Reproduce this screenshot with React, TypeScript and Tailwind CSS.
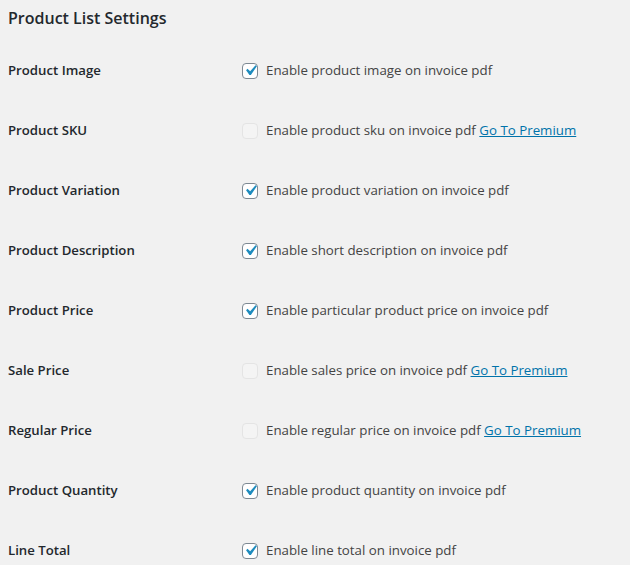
const rows: { label: string; text: string; checked: boolean; premium?: boolean }[] = [
  { label: 'Product Image', text: 'Enable product image on invoice pdf', checked: true },
  { label: 'Product SKU', text: 'Enable product sku on invoice pdf', checked: false, premium: true },
  { label: 'Product Variation', text: 'Enable product variation on invoice pdf', checked: true },
  { label: 'Product Description', text: 'Enable short description on invoice pdf', checked: true },
  { label: 'Product Price', text: 'Enable particular product price on invoice pdf', checked: true },
  { label: 'Sale Price', text: 'Enable sales price on invoice pdf', checked: false, premium: true },
  { label: 'Regular Price', text: 'Enable regular price on invoice pdf', checked: false, premium: true },
  { label: 'Product Quantity', text: 'Enable product quantity on invoice pdf', checked: true },
  { label: 'Line Total', text: 'Enable line total on invoice pdf', checked: true },
];

function Checkbox({ checked }: { checked: boolean }) {
  if (!checked) {
    return <span className="w-4 h-4 shrink-0 rounded-[4px] border border-[#e4e4e4] bg-[#f4f4f4]" />;
  }
  return (
    <span className="w-4 h-4 shrink-0 rounded-[4px] border border-[#7e8993] bg-white flex items-center justify-center overflow-visible">
      <svg viewBox="0 0 20 20" className="w-[21px] h-[21px] shrink-0 -mt-[1px]">
        <path d="M14.83 4.89l1.34.94-5.81 8.38H9.02L5.78 9.67l1.34-1.25 2.57 2.4z" fill="#1e8cbe" />
      </svg>
    </span>
  );
}

export default function App() {
  return (
    <div className="bg-[#f1f1f1] min-h-[565px] pl-2 font-['Open_Sans',sans-serif] text-[13.3px] text-[#444]">
      <h2 className="pt-[7px] text-[16px] font-semibold text-[#23282d] leading-[22px]">Product List Settings</h2>
      <div className="mt-[12px]">
        {rows.map((r) => (
          <div key={r.label} className="flex items-center h-[60px]">
            <div className="w-[234px] shrink-0 text-[13.2px] font-semibold text-[#23282d]">{r.label}</div>
            <label className="flex items-center gap-2">
              <Checkbox checked={r.checked} />
              <span>
                {r.text}
                {r.premium && (
                  <>
                    {' '}
                    <a href="#" className="text-[#0073aa] underline">Go To Premium</a>
                  </>
                )}
              </span>
            </label>
          </div>
        ))}
      </div>
    </div>
  );
}
